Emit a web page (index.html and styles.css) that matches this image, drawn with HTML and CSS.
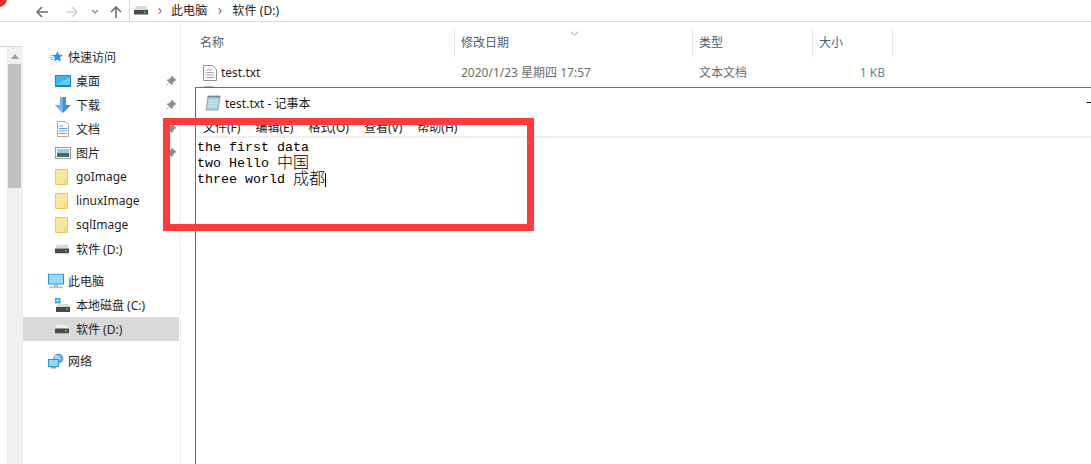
FILE: index.html
```html
<!DOCTYPE html>
<html lang="zh">
<head>
<meta charset="utf-8">
<title>test.txt - 记事本</title>
<link rel="stylesheet" href="styles.css">
</head>
<body>
<div class="desktop">
  <div class="red-dot"></div>
  <div class="explorer">
    <div class="navbar">
      <div class="nav-buttons">
        <svg class="nav-back" width="14" height="14" viewBox="0 0 14 14"><path d="M13 7H2M7 2L2 7l5 5" fill="none" stroke="#6f6f6f" stroke-width="1.6"/></svg>
        <svg class="nav-forward" width="14" height="14" viewBox="0 0 14 14"><path d="M1 7h11M7 2l5 5-5 5" fill="none" stroke="#d4d4d4" stroke-width="1.6"/></svg>
        <svg class="nav-down" width="8" height="6" viewBox="0 0 8 6"><path d="M1 1l3 3 3-3" fill="none" stroke="#8a8a8a" stroke-width="1.3"/></svg>
        <svg class="nav-up" width="14" height="14" viewBox="0 0 14 14"><path d="M7 13V2M2 7l5-5 5 5" fill="none" stroke="#6f6f6f" stroke-width="1.6"/></svg>
      </div>
      <div class="address">
        <svg class="drive" width="16" height="10" viewBox="0 0 16 10"><path d="M1 5l2-4h10l2 4z" fill="#d9d9d9"/><rect x="1" y="5" width="14" height="4.500" fill="#4a4a4a"/><rect x="11" y="6.500" width="2" height="1.500" fill="#35d04a"/></svg>
        <span class="crumb-sep">›</span>
        <span class="crumb">此电脑</span>
        <span class="crumb-sep">›</span>
        <span class="crumb">软件 (D:)</span>
      </div>
    </div>
    <div class="main">
      <div class="scrollbar">
        <svg class="scroll-up" width="8" height="5" viewBox="0 0 8 5"><path d="M0 5l4-5 4 5z" fill="#a0a0a0"/></svg>
        <div class="scroll-thumb"></div>
      </div>
      <nav class="sidebar">
        <div class="tree-row tree-head">
          <svg class="ico" width="16" height="14" viewBox="0 0 16 14"><path d="M9.500 1l1.500 3.700 4.200.3-3.300 2.600 1.100 4.100L9.500 9.500l-3.500 2.200L7 7.600 3.800 5l4.200-.3z" fill="#2d8fe0"/><path d="M2 5.500h3M1 7.500h4M2 9.500h3" stroke="#7fc2f0" stroke-width="1"/></svg>
          <span>快速访问</span>
        </div>
        <div class="tree-row">
          <svg class="ico" width="16" height="14" viewBox="0 0 16 14"><rect x="0" y="1" width="16" height="12" fill="#1883d7"/><rect x="1" y="2" width="14" height="9" fill="#37b5f5"/><path d="M1 11L15 3v8z" fill="#62cdf7"/></svg>
          <span>桌面</span><svg class="pin" width="10" height="10" viewBox="0 0 10 10"><path d="M6 0l4 4-1.500.8-2 2.200L6 9 1 4l2-.5 2.200-2zM3 7L0 10" fill="#8d8d8d" stroke="#8d8d8d" stroke-width=".6"/></svg>
        </div>
        <div class="tree-row">
          <svg class="ico" width="16" height="16" viewBox="0 0 16 16"><path d="M5 0h6v8h5l-8 8-8-8h5z" fill="#3c8ddd"/><path d="M5 0h3v16l-8-8h5z" fill="#6fb2ee"/></svg>
          <span>下载</span><svg class="pin" width="10" height="10" viewBox="0 0 10 10"><path d="M6 0l4 4-1.500.8-2 2.200L6 9 1 4l2-.5 2.200-2zM3 7L0 10" fill="#8d8d8d" stroke="#8d8d8d" stroke-width=".6"/></svg>
        </div>
        <div class="tree-row">
          <svg class="ico" width="16" height="16" viewBox="0 0 16 16"><path d="M2.500.500h8l3 3v12h-11z" fill="#fff" stroke="#a9a9a9"/><path d="M4 5h4M4 7.500h8M4 10h8M4 12.500h8" stroke="#5a9fd6"/></svg>
          <span>文档</span><svg class="pin" width="10" height="10" viewBox="0 0 10 10"><path d="M6 0l4 4-1.500.8-2 2.200L6 9 1 4l2-.5 2.200-2zM3 7L0 10" fill="#8d8d8d" stroke="#8d8d8d" stroke-width=".6"/></svg>
        </div>
        <div class="tree-row">
          <svg class="ico" width="16" height="12" viewBox="0 0 16 12"><rect x=".5" y=".5" width="15" height="11" fill="#fff" stroke="#9a9a9a"/><rect x="2" y="2" width="12" height="4" fill="#a8c9dd"/><rect x="2" y="6" width="12" height="4" fill="#3f6d6a"/></svg>
          <span>图片</span><svg class="pin" width="10" height="10" viewBox="0 0 10 10"><path d="M6 0l4 4-1.500.8-2 2.200L6 9 1 4l2-.5 2.200-2zM3 7L0 10" fill="#8d8d8d" stroke="#8d8d8d" stroke-width=".6"/></svg>
        </div>
        <div class="tree-row">
          <svg class="ico" width="13" height="16" viewBox="0 0 13 16"><path d="M.5.500h12v15H.5z" fill="#fde69a" stroke="#edc95b"/><path d="M10 15v-4h2.500" fill="none" stroke="#edc95b"/></svg>
          <span class="latin">goImage</span>
        </div>
        <div class="tree-row">
          <svg class="ico" width="13" height="16" viewBox="0 0 13 16"><path d="M.5.500h12v15H.5z" fill="#fde69a" stroke="#edc95b"/><path d="M10 15v-4h2.500" fill="none" stroke="#edc95b"/></svg>
          <span class="latin">linuxImage</span>
        </div>
        <div class="tree-row">
          <svg class="ico" width="13" height="16" viewBox="0 0 13 16"><path d="M.5.500h12v15H.5z" fill="#fde69a" stroke="#edc95b"/><path d="M10 15v-4h2.500" fill="none" stroke="#edc95b"/></svg>
          <span class="latin">sqlImage</span>
        </div>
        <div class="tree-row">
          <svg class="ico" width="14" height="9" viewBox="0 0 14 9"><path d="M0 4l2-4h10l2 4z" fill="#d9d9d9"/><rect x="0" y="4" width="14" height="5" fill="#4a4a4a"/><rect x="10" y="5.500" width="2" height="1.500" fill="#35d04a"/></svg>
          <span>软件 (D:)</span>
        </div>
        <div class="tree-row tree-head tree-gap">
          <svg class="ico" width="16" height="15" viewBox="0 0 16 15"><rect x="0" y="0" width="16" height="11" fill="#2a93d8"/><rect x="1" y="1" width="14" height="9" fill="#8fdcfa"/><rect x="6" y="11" width="4" height="2" fill="#a9a9a9"/><rect x="1" y="13" width="14" height="2" fill="#bdbdbd"/></svg>
          <span>此电脑</span>
        </div>
        <div class="tree-row">
          <svg class="ico" width="15" height="14" viewBox="0 0 15 14"><path d="M1 9l2-3h10l2 3z" fill="#d9d9d9"/><rect x="1" y="9" width="14" height="5" fill="#4a4a4a"/><rect x="11" y="10.500" width="2" height="1.500" fill="#35d04a"/><path d="M0 0h2.500v2.500H0zM3 0h2.500v2.500H3zM0 3h2.500v2.500H0zM3 3h2.500v2.500H3z" fill="#22aaee"/></svg>
          <span>本地磁盘 (C:)</span>
        </div>
        <div class="tree-row tree-selected">
          <svg class="ico" width="14" height="9" viewBox="0 0 14 9"><path d="M0 4l2-4h10l2 4z" fill="#eeeeee"/><rect x="0" y="4" width="14" height="5" fill="#4a4a4a"/><rect x="10" y="5.500" width="2" height="1.500" fill="#35d04a"/></svg>
          <span>软件 (D:)</span>
        </div>
        <div class="tree-row tree-head tree-gap">
          <svg class="ico" width="16" height="16" viewBox="0 0 16 16"><circle cx="10.500" cy="5.500" r="5" fill="#6da5cf"/><path d="M7 2l4 1 2 3-3 2-3-2z" fill="#b8d7ea"/><rect x="0" y="6" width="11" height="8" fill="#2a93d8"/><rect x="1" y="7" width="9" height="6" fill="#8fdcfa"/><rect x="3" y="14" width="5" height="1.500" fill="#9f9f9f"/></svg>
          <span>网络</span>
        </div>
      </nav>
      <section class="files">
        <div class="file-head">
          <div class="col col-name">名称</div>
          <div class="col col-date">修改日期<svg class="sort" width="9" height="5" viewBox="0 0 9 5"><path d="M.5.500l4 4 4-4" fill="none" stroke="#a0a0a0"/></svg></div>
          <div class="col col-type">类型</div>
          <div class="col col-size">大小</div>
        </div>
        <div class="file-row">
          <div class="cell cell-name">
            <svg width="14" height="16" viewBox="0 0 14 16"><path d="M.5.500h9l4 4v11H.5z" fill="#fff" stroke="#8f8f8f"/><path d="M3 5h6M3 7.500h8M3 10h8M3 12.500h8" stroke="#a8a8a8"/></svg>
            <span>test.txt</span>
          </div>
          <div class="cell cell-date">2020/1/23 星期四 17:57</div>
          <div class="cell cell-type">文本文档</div>
          <div class="cell cell-size">1 KB</div>
        </div>
        <div class="file-peek"></div>
      </section>
    </div>
  </div>

  <div class="notepad">
    <div class="np-title">
      <svg width="16" height="16" viewBox="0 0 16 16"><path d="M3 1h12l-2 14H1z" fill="#a9d6e2" stroke="#7c95a3" stroke-width=".8"/><path d="M4 1l-.3 1.600M6 1l-.3 1.600M8 1l-.3 1.600M10 1l-.3 1.600M12 1l-.3 1.600M14 1l-.3 1.600" stroke="#444" stroke-width=".8"/><path d="M3.500 6h9M3.200 8.500h9M2.800 11h9" stroke="#d8eef4" stroke-width=".8"/></svg>
      <span>test.txt - 记事本</span>
      <span class="np-min">–</span>
    </div>
    <div class="np-menu">
      <span>文件(F)</span><span>编辑(E)</span><span>格式(O)</span><span>查看(V)</span><span>帮助(H)</span>
    </div>
    <div class="np-text">
      <div class="np-line">the first data</div>
      <div class="np-line">two Hello <span class="cjk">中国</span></div>
      <div class="np-line">three world <span class="cjk">成都</span><span class="caret"></span></div>
    </div>
  </div>

  <div class="annotation"></div>
</div>
</body>
</html>
```
FILE: styles.css
```css
* { box-sizing: border-box; }
html, body { margin: 0; padding: 0; }
body {
  width: 1091px;
  height: 464px;
  overflow: hidden;
  background: #fff;
  font-family: "Noto Sans", "Noto Sans CJK SC", sans-serif;
  font-size: 12px;
  color: #1a1a1a;
}
.desktop { position: relative; width: 1091px; height: 464px; overflow: hidden; }
.red-dot {
  position: absolute; left: -9px; top: -9px;
  width: 16px; height: 16px; border-radius: 50%;
  background: #e8322c;
}
.explorer { display: flex; flex-direction: column; height: 464px; }

/* nav bar */
.navbar { display: flex; height: 22px; border-bottom: 1px solid #d9d9d9; flex: none; }
.nav-buttons { width: 129px; display: flex; align-items: center; padding: 2px 0 0 35px; }
.nav-back { margin-right: 16px; }
.nav-forward { margin-right: 12px; }
.nav-down { margin-right: 10px; }
.address {
  flex: 1; display: flex; align-items: center;
  border-left: 1px solid #d9d9d9;
  padding: 0 0 1px 3px;
  color: #222;
}
.drive { flex: none; }
.crumb-sep { color: #777; font-size: 14px; width: 22px; text-align: center; line-height: 16px; }
.crumb { letter-spacing: 0.1px; }
.crumb + .crumb-sep { width: 25px; }

/* main */
.main { flex: 1; display: flex; min-height: 0; }
.scrollbar {
  position: relative;
  width: 23px; margin-top: 24px;
  padding-left: 7px;
  border-top: 1px solid #d4d4d4;
  flex: none;
}
.scrollbar::before {
  content: ""; position: absolute; left: 7px; right: 0; top: 0; bottom: 0;
  background: #f0f0f0;
}
.scroll-up { position: absolute; left: 11px; top: 7px; }
.scroll-thumb { position: absolute; left: 8px; top: 17px; width: 13px; height: 124px; background: #c1c1c1; }

.sidebar {
  width: 158px; flex: none;
  padding-top: 23px;
  border-right: 1px solid #f0f0f0;
}
.tree-row {
  position: relative;
  display: flex; align-items: center;
  height: 24px; width: 156px;
  padding-left: 33px;
  color: #1f1f1f;
}
.tree-row .ico { position: absolute; left: 32px; top: 50%; transform: translateY(-50%); }
.tree-row span { padding-left: 20px; }
.tree-row .latin { padding-bottom: 2px; }
.tree-head .ico { left: 25px; }
.tree-head span { padding-left: 12px; }
.tree-gap { margin-top: 8px; }
.tree-selected { background: #d9d9d9; }
.pin { position: absolute; left: 143px; top: 7px; }

/* file list */
.files { flex: 1; position: relative; min-width: 0; }
.file-head { display: flex; height: 28px; margin-top: 7px; }
.col {
  position: relative;
  padding: 5px 0 0 6px;
  border-right: 1px solid #e5e5e5;
  color: #4c607a;
  line-height: 18px;
}
.col-name { width: 274px; padding-left: 19px; }
.col-date { width: 238px; }
.col-type { width: 120px; }
.col-size { width: 80px; }
.sort { position: absolute; left: 115px; top: 2px; }
.file-row { display: flex; height: 24px; margin-top: 4px; color: #6d6d6d; line-height: 24px; }
.cell { flex: none; }
.cell-name { width: 274px; padding-left: 22px; display: flex; align-items: center; gap: 4px; color: #1f1f1f; }
.cell-date { width: 238px; padding-left: 6px; }
.cell-type { width: 120px; padding-left: 6px; }
.cell-size { width: 72px; text-align: right; color: #6d7f95; }
.file-peek { position: absolute; left: 22px; top: 64px; width: 11px; height: 4px; border: 1px solid #b0b0b0; border-bottom: 0; border-radius: 2px 2px 0 0; }

/* notepad window */
.notepad {
  position: absolute; left: 195px; top: 87px; right: 0; bottom: 0;
  background: #fff;
  border-left: 1px solid #2b7cc4;
  border-top: 1px solid #2b7cc4;
}
.np-title { position: relative; display: flex; align-items: center; gap: 4px; height: 30px; padding: 0 0 0 9px; color: #1a1a1a; }
.np-min { position: absolute; right: -1px; top: 5px; color: #111; }
.np-menu { display: flex; gap: 15px; height: 20px; padding: 1px 0 0 7px; border-bottom: 2px solid #f0f0f0; color: #1a1a1a; line-height: 17px; }
.np-text {
  padding: 2px 0 0 1px;
  font-family: "Liberation Mono", monospace;
  font-size: 13.33px;
  color: #000;
}
.np-line { height: 16px; line-height: 16px; white-space: nowrap; }
.cjk { font-family: "Noto Sans CJK SC", sans-serif; font-size: 16px; line-height: 0; font-weight: 300; vertical-align: -1px; }
.caret { display: inline-block; width: 1px; height: 14px; background: #000; vertical-align: -4px; }

/* red annotation */
.annotation {
  position: absolute; left: 163px; top: 118px;
  width: 371px; height: 113px;
  border: 7px solid #ff3b3b;
}
```
